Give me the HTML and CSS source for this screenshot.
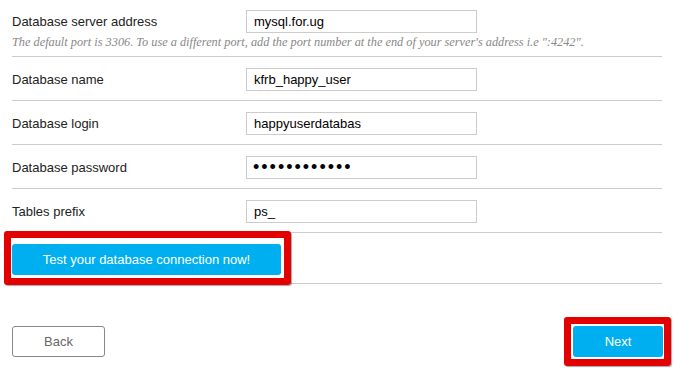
FILE: index.html
```html
<!DOCTYPE html>
<html>
<head>
	<title>Database configuration</title>
	<meta charset="utf-8">
	<link rel="stylesheet" href="styles.css">
</head>
<body>
	<article class="wrapper">
		<section class="row first">
			<div class="field">
				<label for="dbServer">Database server address</label>
				<input type="text" id="dbServer" value="mysql.for.ug">
			</div>
			<p class="hint">The default port is 3306. To use a different port, add the port number at the end of your server's address i.e ":4242".</p>
		</section>
		<section class="row">
			<div class="field">
				<label for="dbName">Database name</label>
				<input type="text" id="dbName" value="kfrb_happy_user">
			</div>
		</section>
		<section class="row">
			<div class="field">
				<label for="dbLogin">Database login</label>
				<input type="text" id="dbLogin" value="happyuserdatabas">
			</div>
		</section>
		<section class="row">
			<div class="field">
				<label for="dbPassword">Database password</label>
				<input type="password" id="dbPassword" class="secret" value="happyuser123">
			</div>
		</section>
		<section class="row">
			<div class="field">
				<label for="dbPrefix">Tables prefix</label>
				<input type="text" id="dbPrefix" value="ps_">
			</div>
		</section>
		<section class="row test">
			<button type="button" class="btn btn-blue btn-test">Test your database connection now!</button>
		</section>
		<footer class="actions">
			<button type="button" class="btn btn-back">Back</button>
			<button type="button" class="btn btn-blue btn-next">Next</button>
		</footer>
		<div class="mark mark-test"></div>
		<div class="mark mark-next"></div>
	</article>
</body>
</html>
```

FILE: styles.css
```css
*{
	padding: 0;
	margin: 0;
	box-sizing: border-box;
}
body{
	background: #fff;
	font-family: "Liberation Sans", Arial, sans-serif;
	font-size: 13px;
	color: #222;
}
.wrapper{
	position: relative;
	width: 694px;
	height: 391px;
	padding-left: 12px;
}
.row{
	width: 650px;
	padding: 11px 0 9px;
	border-bottom: 1px solid #ccc;
}
.row.first{
	padding: 10px 0 7px;
}
.field{
	display: flex;
	align-items: center;
	height: 23px;
}
.field label{
	width: 234px;
	font-size: 13px;
	color: #222;
}
.field input{
	width: 231px;
	height: 23px;
	border: 1px solid #ccc;
	padding: 0 7px;
	font-family: "Liberation Sans", Arial, sans-serif;
	font-size: 13px;
	color: #000;
	outline: none;
}
.field input.secret{
	font-size: 18px;
	letter-spacing: 2px;
	padding-left: 6px;
}
.hint{
	margin-top: 2px;
	line-height: 14px;
	font-family: "Liberation Serif", Georgia, serif;
	font-style: italic;
	font-size: 12.3px;
	color: #888;
}
.row.test{
	padding: 11px 0 8px;
}
.btn{
	height: 31px;
	border-radius: 3px;
	font-family: "Liberation Sans", Arial, sans-serif;
	font-size: 13px;
	cursor: pointer;
}
.btn-blue{
	background: #00aff0;
	border: none;
	color: #fff;
}
.btn-test{
	width: 269px;
	display: block;
}
.actions{
	width: 651px;
	margin-top: 42px;
	display: flex;
	justify-content: space-between;
}
.btn-back{
	width: 93px;
	background: #fff;
	border: 1px solid #888;
	color: #666;
}
.btn-next{
	width: 90px;
}
.mark{
	position: absolute;
	border: 7px solid #e30000;
	border-radius: 3px;
	box-shadow: 1px 1px 1px rgba(0,0,0,0.35);
}
.mark-test{
	left: 4px;
	top: 231px;
	width: 287px;
	height: 54px;
}
.mark-next{
	left: 564px;
	top: 317px;
	width: 107px;
	height: 49px;
}
```
